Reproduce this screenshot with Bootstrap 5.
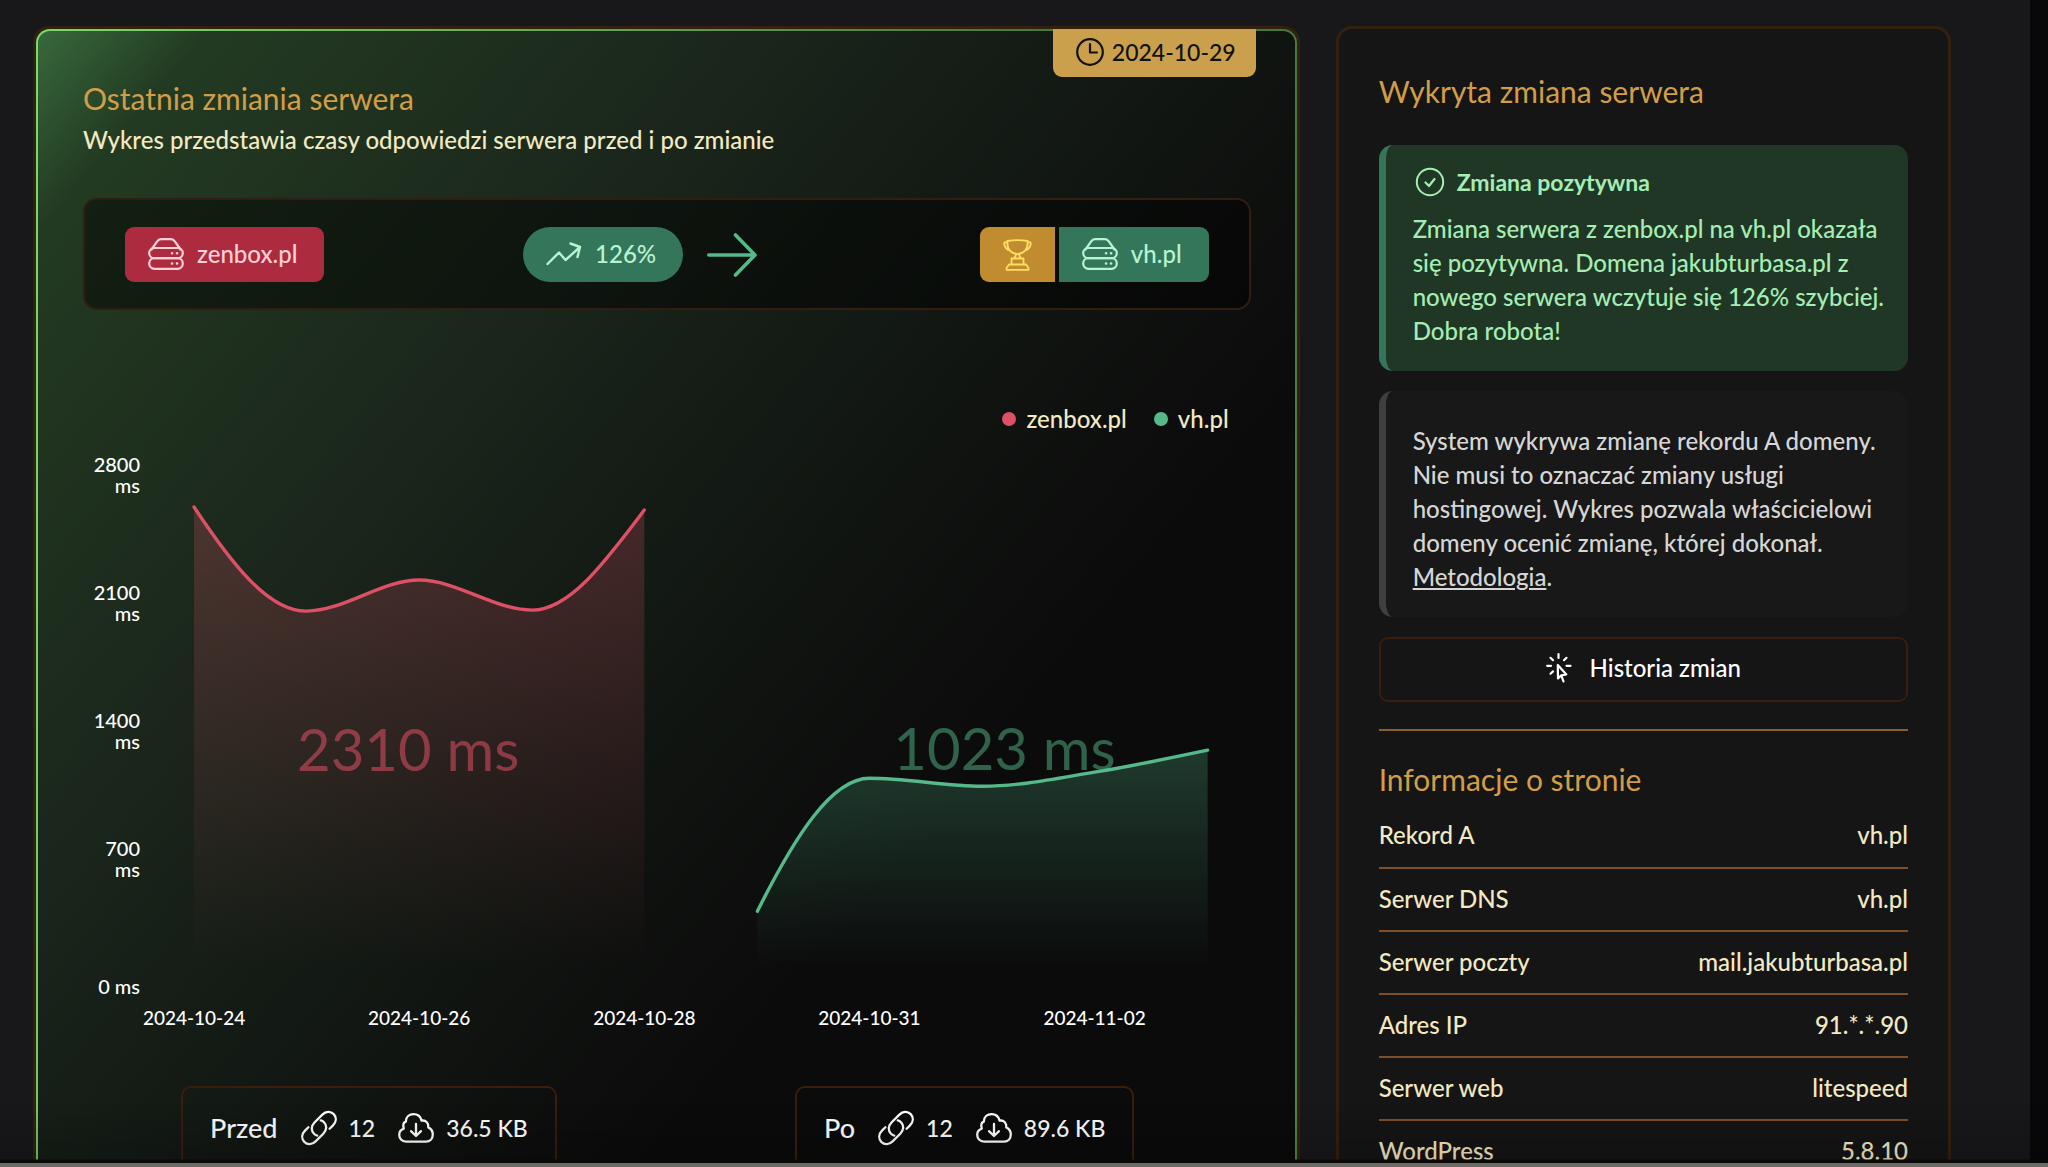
<!DOCTYPE html>
<html lang="pl" data-bs-theme="dark">
<head>
<meta charset="utf-8">
<meta name="viewport" content="width=device-width, initial-scale=1">
<title>Zmiana serwera</title>
<link href="https://cdn.jsdelivr.net/npm/bootstrap@5.3.0/dist/css/bootstrap.min.css" rel="stylesheet">
<style>
body{font-family:Lato,"Noto Sans",sans-serif;font-size:24px;font-weight:500;line-height:34px;background:#18181b;color:#f3e9c3;height:100vh;overflow:hidden}
.page-area{padding:26px 79px 0 33px;height:100vh;overflow:hidden}
.page-row{--bs-gutter-x:36px}
.edge-strip{flex:0 0 18px;background:#08080a}
.frame{border:3px solid #34200f;border-radius:16px;height:100%}
.frame-green{position:relative;border:2px solid transparent;border-radius:14px;padding:0 44px 60px 45px;min-height:1240px;
 background:linear-gradient(130deg,#38693b 0,#223a22 130px,#20331f 280px,#1b271c 520px,#141b15 780px,#0d0e0d 1100px,#0b0b0b 1200px) padding-box,
 linear-gradient(100deg,#78dc66 0,#5c9a4c 45%,#3f6f3a 75%,#4c8a43 100%) border-box}
.frame-green>.main-head{padding-top:48px}
.side{background:#151515;padding:43px 40px}
h2{font-size:30px;line-height:38px;font-weight:400;color:#d29d48;margin:0}
.main-head p{margin:4px 0 39px;line-height:38px}
.date-tag{position:absolute;top:-2px;right:39px;background:#cba04c;color:#111;height:48px;padding:0 20px 2px 23px;gap:8px;border-radius:0 0 9px 9px;font-size:23px}
.switch-box{border:2px solid #331d10;border-radius:14px;background:rgba(0,0,0,.45);padding:27px 40px 26px}
.tagbox{height:55px;padding:0 27px 2px 23px;gap:13px;border-radius:9px}
.tag-red{background:#ad2b3f;color:#ffd0d6}
.tag-green{background:#34765a;color:#b8f3d2}
.tag-gold{background:#c18b30;color:#ffdf62;padding:0 23px}
.legend{margin:90px 22px 7px 0;gap:27px;line-height:38px}
.legend i{width:14px;height:14px;border-radius:50%;margin-right:10px}
.dot-red{background:#de5065}.dot-green{background:#55b98a}
.chart{display:block;width:100%;height:auto;overflow:visible}
.chart .axis{font-size:20px;fill:#fff}
.chart .day{font-size:19px;fill:#fff;text-anchor:middle}
.chart .avg{font-size:58px;font-weight:400;text-anchor:middle}
.stats{margin-top:47px}
.stat-box{border:2px solid #3a1d0d;border-radius:10px;height:84px;padding:0 27px;gap:23px;color:#fff;font-size:23px}
.stat-box strong{font-size:27px;font-weight:500}
.note{border-left:7px solid #3f3f40;border-radius:14px;background:#181818;color:#d6d6d6;padding:33px 20px 23px 27px;margin-bottom:20px}
.note-ok{border-color:#34765a;background:#203725;color:#a4edb4;padding-top:20px}
.note-title{gap:10px;font-weight:700;font-size:23px;margin-bottom:13px}
.note p{margin:0}.note a{color:inherit}
.side h2.first{margin-bottom:35px}
.btn-history{border:2px solid #3a1d0d;border-radius:9px;height:65px;color:#fff;font-size:24px;font-weight:500;gap:18px;padding:4px 12px 8px}
.side hr{margin:27px 0 29px;border-top:2px solid #8a602c;opacity:1}
.info-table{margin-top:7px}
.info-table th,.info-table td{height:63px;font-weight:500;padding:0 0 2px;border-bottom:2px solid #7d5028}
.info-table td{text-align:right}
svg.ic{fill:none;stroke:currentColor;stroke-linecap:round;stroke-linejoin:round;flex:none}
.cut-shade{height:64px;background:linear-gradient(rgba(0,0,0,0),rgba(0,0,0,.15) 56px,#0c0a08 57px,#0c0a08);border-bottom:4px solid #6c6a64;pointer-events:none}
</style>
<script src="https://cdn.jsdelivr.net/npm/bootstrap@5.3.0/dist/js/bootstrap.bundle.min.js"></script>
</head>
<body>
<svg width="0" height="0" class="position-absolute" aria-hidden="true">
 <symbol id="server" viewBox="0 0 36 32"><path d="M3.500 11.500 9 3.600Q10.600 1.200 13 1.200H23Q25.400 1.200 27 3.600L32.500 11.500" /><rect x="1.200" y="10" width="33.600" height="10.200" rx="5.100"/><rect x="1.200" y="20.200" width="33.600" height="10.600" rx="5.200"/><path d="M24 15.200h.1M29 15.200h.1M24 25.500h.1M29 25.500h.1" stroke-width="2.600"/></symbol>
 <symbol id="link" viewBox="0 0 36 36"><path d="M7.400 17.200 4.200 20.400C.4 24.200 .4 28.800 3.300 31.900C6.400 35 11.200 34.800 14.600 31.400L22.300 23.700C26 20 26 15.200 23 12.200Q21.600 10.800 19.800 10.400M28.600 18.800 31.800 15.600C35.600 11.800 35.600 7.200 32.700 4.100C29.600 1 24.800 1.200 21.400 4.600L13.700 12.300C10 16 10 20.800 13 23.800Q14.400 25.200 16.200 25.600"/></symbol>
 <symbol id="cloud" viewBox="0 0 36 30"><path d="M8 28.600C3.800 28.600 1.200 25.400 1.200 21.800C1.200 18.400 3.400 16.400 5.800 15.600C4.700 11.600 5.800 9.200 7.800 8.600C8 4 11.200 1.200 15.600 1.200C19.800 1.200 22.600 3.800 23.600 7.600C27.600 7 30.800 9.600 30.300 14.400C33.200 15.800 34.800 18.400 34.800 21.600C34.800 25.600 32 28.600 28 28.600ZM18 11V22.500M13 18.200 18 23 23 18.200"/></symbol>
</svg>
<div class="d-flex">
 <div class="page-area container-fluid flex-fill">
  <div class="row page-row">
   <main class="col-8">
    <div class="frame">
     <section class="frame-green">
      <div class="date-tag d-flex align-items-center">
       <svg class="ic" width="28" height="28" viewBox="0 0 28 28" stroke-width="2.200"><circle cx="14" cy="14" r="12.800"/><path d="M14 6V14.500H21"/></svg><time datetime="2024-10-29">2024-10-29</time>
      </div>
      <header class="main-head"><h2>Ostatnia zmiania serwera</h2><p>Wykres przedstawia czasy odpowiedzi serwera przed i po zmianie</p></header>
      <div class="switch-box d-flex align-items-center justify-content-between">
       <div class="tagbox tag-red d-flex align-items-center"><svg class="ic" width="36" height="32" stroke-width="2.200"><use href="#server"/></svg>zenbox.pl</div>
       <div class="d-flex align-items-center gap-4 me-4">
        <div class="tagbox tag-green rounded-pill d-flex align-items-center"><svg class="ic" width="36" height="24" viewBox="0 0 36 24" stroke-width="2.400"><path d="M1.500 22 13 10.500 19.500 18 34 5M24.500 1.500 34 5 31.500 15"/></svg>126%</div>
        <svg class="ic" width="50" height="44" viewBox="0 0 50 44" stroke-width="3.600" color="#55b98a"><path d="M1.800 22H47.500M28.500 2 48 22 28.500 42"/></svg>
       </div>
       <div class="d-flex gap-1">
        <div class="tagbox tag-gold rounded-end-0 d-flex align-items-center"><svg class="ic" width="29" height="32" viewBox="0 0 29 32" stroke-width="1.800"><path d="M4.300 2Q14.500 .4 24.700 2Q25.200 14 14.500 15.200Q3.800 14 4.300 2ZM4.400 3.500Q1 2.600 1.200 5Q2 9.500 6.500 11.500M24.600 3.500Q28 2.600 27.800 5Q27 9.500 22.500 11.500M12.700 15.200V16.800L10.800 19.500M16.300 15.200V16.800L18.200 19.500M8.500 19.500H20.500V25.500H8.500ZM6 25.500H23L25.500 29V30.800H3.500V29Z"/></svg></div>
        <div class="tagbox tag-green rounded-start-0 d-flex align-items-center"><svg class="ic" width="36" height="32" stroke-width="2.200"><use href="#server"/></svg>vh.pl</div>
       </div>
      </div>
      <div class="legend d-flex justify-content-end">
       <span class="d-flex align-items-center"><i class="dot-red"></i>zenbox.pl</span>
       <span class="d-flex align-items-center"><i class="dot-green"></i>vh.pl</span>
      </div>
      <svg class="chart" viewBox="0 0 1167 594" role="img" aria-label="Czasy odpowiedzi serwera">
       <defs>
        <linearGradient id="gr" gradientUnits="userSpaceOnUse" x1="0" y1="62" x2="0" y2="522"><stop stop-color="#de5065" stop-opacity=".25"/><stop offset="1" stop-color="#de5065" stop-opacity="0"/></linearGradient>
        <linearGradient id="gg" gradientUnits="userSpaceOnUse" x1="0" y1="305" x2="0" y2="522"><stop stop-color="#55b98a" stop-opacity=".27"/><stop offset="1" stop-color="#55b98a" stop-opacity="0"/></linearGradient>
       </defs>
       <g class="axis" text-anchor="end">
        <text x="57" y="27">2800<tspan x="57" dy="21">ms</tspan></text>
        <text x="57" y="155">2100<tspan x="57" dy="21">ms</tspan></text>
        <text x="57" y="283">1400<tspan x="57" dy="21">ms</tspan></text>
        <text x="57" y="411">700<tspan x="57" dy="21">ms</tspan></text>
        <text x="57" y="549">0 ms</text>
       </g>
       <text class="day" x="111" y="580">2024-10-24</text><text class="day" x="336" y="580">2024-10-26</text><text class="day" x="561" y="580">2024-10-28</text><text class="day" x="786" y="580">2024-10-31</text><text class="day" x="1011" y="580">2024-11-02</text>
       <path fill="url(#gr)" d="M111 62C148 118 185 166 223 166S298 135 336 135S411 165 449 165S523 115 561 65V522H111Z"/>
       <path fill="url(#gg)" d="M674 466C711 392 748 333 786 333S861 341 899 341S974 333 1011 327S1086 313 1124 305V522H674Z"/>
       <text class="avg" x="325" y="326" fill="#de5065" opacity=".55">2310 ms</text>
       <text class="avg" x="921" y="325" fill="#55b98a" opacity=".5">1023 ms</text>
       <g fill="none" stroke-width="3.400" stroke-linecap="round">
        <path stroke="#de5065" d="M111 62C148 118 185 166 223 166S298 135 336 135S411 165 449 165S523 115 561 65"/>
        <path stroke="#55b98a" d="M674 466C711 392 748 333 786 333S861 341 899 341S974 333 1011 327S1086 313 1124 305"/>
       </g>
      </svg>
      <div class="row stats">
       <div class="col-6 d-flex justify-content-center"><div class="stat-box d-flex align-items-center"><strong>Przed</strong>
        <span class="d-flex align-items-center gap-2"><svg class="ic me-1" width="36" height="36" stroke-width="2.300"><use href="#link"/></svg>12</span>
        <span class="d-flex align-items-center gap-2"><svg class="ic me-1" width="36" height="30" stroke-width="2.300"><use href="#cloud"/></svg>36.5 KB</span></div></div>
       <div class="col-6 d-flex justify-content-center"><div class="stat-box d-flex align-items-center"><strong>Po</strong>
        <span class="d-flex align-items-center gap-2"><svg class="ic me-1" width="36" height="36" stroke-width="2.300"><use href="#link"/></svg>12</span>
        <span class="d-flex align-items-center gap-2"><svg class="ic me-1" width="36" height="30" stroke-width="2.300"><use href="#cloud"/></svg>89.6 KB</span></div></div>
      </div>
     </section>
    </div>
   </main>
   <aside class="col-4">
    <div class="frame side">
     <h2 class="first">Wykryta zmiana serwera</h2>
     <div class="note note-ok">
      <div class="note-title d-flex align-items-center"><svg class="ic" width="34" height="34" viewBox="0 0 34 34" stroke-width="2"><circle cx="17" cy="17" r="13.200"/><path d="M12.500 17.500 16 21 21.500 14" stroke-width="2.200"/></svg>Zmiana pozytywna</div>
      <p>Zmiana serwera z zenbox.pl na vh.pl okazała się pozytywna. Domena jakubturbasa.pl z nowego serwera wczytuje się 126% szybciej. Dobra robota!</p>
     </div>
     <div class="note"><p>System wykrywa zmianę rekordu A domeny. Nie musi to oznaczać zmiany usługi hostingowej. Wykres pozwala właścicielowi domeny ocenić zmianę, której dokonał. <a href="#">Metodologia</a>.</p></div>
     <button type="button" class="btn btn-history w-100 d-flex align-items-center justify-content-center"><svg class="ic" width="26" height="30" viewBox="0 0 26 30" stroke-width="2.200"><path d="M12.500 1.200V5M4.500 4.800 7 7.200M20.500 4.800 18 7.200M1.200 12.800H5M20.500 12.800H24.500M4.500 20.800 7 18.400M11.800 12 12 25.500 15.300 22.300 20.300 21.500ZM15.300 22.300 17.500 28.500"/></svg>Historia zmian</button>
     <hr>
     <h2>Informacje o stronie</h2>
     <table class="w-100 info-table"><tbody>
      <tr><th scope="row">Rekord A</th><td>vh.pl</td></tr>
      <tr><th scope="row">Serwer DNS</th><td>vh.pl</td></tr>
      <tr><th scope="row">Serwer poczty</th><td>mail.jakubturbasa.pl</td></tr>
      <tr><th scope="row">Adres IP</th><td>91.*.*.90</td></tr>
      <tr><th scope="row">Serwer web</th><td>litespeed</td></tr>
      <tr><th scope="row">WordPress</th><td>5.8.10</td></tr>
     </tbody></table>
    </div>
   </aside>
  </div>
 </div>
 <div class="edge-strip"></div>
</div>
<div class="fixed-bottom cut-shade"></div>
</body>
</html>
